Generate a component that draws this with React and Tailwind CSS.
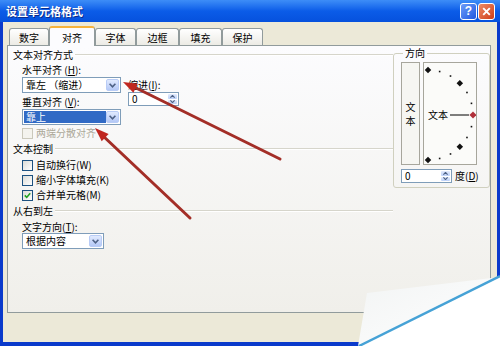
import React from 'react';

const Chevron = () => (
  <svg width="7" height="5" viewBox="0 0 7 5">
    <path d="M0.6 0.8 L3.5 3.8 L6.4 0.8" fill="none" stroke="#4D6185" strokeWidth="1.6" />
  </svg>
);

const DropBtn = () => (
  <div className="w-[13px] flex items-center justify-center bg-gradient-to-b from-[#E1EAFE] to-[#B4C8F6] border border-[#B9CCF6] rounded-[2px]">
    <Chevron />
  </div>
);

const Select = ({ value, width, selected }) => (
  <div className={`flex items-stretch h-[16px] border border-[#7F9DB9] bg-white p-[1px] ${width}`}>
    <div
      className={`flex-1 flex items-center px-[2px] leading-[12px] ${
        selected ? 'bg-[#316AC5] text-white' : ''
      }`}
    >
      {value}
    </div>
    <DropBtn />
  </div>
);

const Spin = ({ width }) => (
  <div className={`flex h-[14px] border border-[#7F9DB9] bg-white ${width}`}>
    <div className="flex-1 pl-[3px] leading-[12px]">0</div>
    <div className="w-[11px] flex flex-col gap-[1px] p-[1px]">
      <div className="flex-1 flex items-center justify-center bg-gradient-to-b from-[#E3EBFD] to-[#BCD0F8] rounded-[1px]">
        <svg width="5" height="3" viewBox="0 0 5 3">
          <path d="M0.4 2.7 L2.5 0.4 L4.6 2.7" fill="none" stroke="#4D6185" strokeWidth="1.1" />
        </svg>
      </div>
      <div className="flex-1 flex items-center justify-center bg-gradient-to-b from-[#E3EBFD] to-[#BCD0F8] rounded-[1px]">
        <svg width="5" height="3" viewBox="0 0 5 3">
          <path d="M0.4 0.3 L2.5 2.6 L4.6 0.3" fill="none" stroke="#4D6185" strokeWidth="1.1" />
        </svg>
      </div>
    </div>
  </div>
);

const Check = ({ label, checked, disabled }) => (
  <div className="flex items-center gap-[3px] h-[14px]">
    <div
      className={`w-[11px] h-[11px] border flex items-center justify-center ${
        disabled
          ? 'border-[#CAC8BB] bg-[#F4F3EE]'
          : 'border-[#1C5180] bg-gradient-to-br from-[#DCDCD7] to-white'
      }`}
    >
      {checked && (
        <svg width="7" height="7" viewBox="0 0 7 7">
          <path d="M0.8 3.4 L2.7 5.4 L6.2 1.2" fill="none" stroke="#21A121" strokeWidth="1.6" />
        </svg>
      )}
    </div>
    <span className={`leading-[12px] ${disabled ? 'text-[#ACA899]' : ''}`}>{label}</span>
  </div>
);

const GroupHead = ({ title, className }) => (
  <div className={`flex items-center h-[14px] ${className}`}>
    <span className="leading-[12px] pr-[2px]">{title}</span>
    <div className="flex-1 h-[2px] border-t border-[#D6D5CB] border-b border-b-white" />
  </div>
);

const Tab = ({ label, width, active }) =>
  active ? (
    <div
      className={`${width} h-[20px] -mb-[1px] z-10 relative flex items-center justify-center bg-[#FCFCFE] border border-b-0 border-[#919B9C] border-t-2 border-t-[#F6B33D] rounded-t-[3px]`}
    >
      {label}
    </div>
  ) : (
    <div
      className={`${width} h-[17px] flex items-center justify-center bg-gradient-to-b from-white to-[#ECEBE5] border border-b-0 border-[#919B9C] rounded-t-[3px]`}
    >
      {label}
    </div>
  );

const arrowHead = (tx, ty, fx, fy, len, w) => {
  const dx = tx - fx;
  const dy = ty - fy;
  const d = Math.hypot(dx, dy);
  const ux = dx / d;
  const uy = dy / d;
  const bx = tx - ux * len;
  const by = ty - uy * len;
  const nx = -uy * (w / 2);
  const ny = ux * (w / 2);
  return `${tx},${ty} ${bx + nx},${by + ny} ${bx - nx},${by - ny}`;
};

const Dial = () => {
  const cx = 4;
  const cy = 52;
  const r = 45;
  const pts = [];
  for (let a = -90; a <= 90; a += 15) {
    const rad = (a * Math.PI) / 180;
    pts.push({ a, x: cx + r * Math.cos(rad), y: cy - r * Math.sin(rad) });
  }
  return (
    <svg width="52" height="101" viewBox="0 0 52 101">
      {pts.map((p) => {
        if (p.a === 0) {
          return (
            <rect
              key={p.a}
              x={p.x - 2.5}
              y={p.y - 2.5}
              width="5"
              height="5"
              fill="#B0303A"
              transform={`rotate(45 ${p.x} ${p.y})`}
            />
          );
        }
        if (Math.abs(p.a) % 45 === 0) {
          return (
            <rect
              key={p.a}
              x={p.x - 2.3}
              y={p.y - 2.3}
              width="4.6"
              height="4.6"
              fill="#111"
              transform={`rotate(45 ${p.x} ${p.y})`}
            />
          );
        }
        return <rect key={p.a} x={p.x - 0.8} y={p.y - 0.8} width="1.6" height="1.6" fill="#111" />;
      })}
      <text x="4" y="56" fontSize="10" fill="#000" fontFamily="'Noto Sans CJK SC', sans-serif">
        文本
      </text>
      <line x1="26" y1="52" x2="45" y2="52" stroke="#000" strokeWidth="1" />
    </svg>
  );
};

export default function App() {
  return (
    <div className="relative w-[500px] h-[346px] overflow-hidden flex flex-col bg-[#0A3ACB] text-[10px] text-black font-['Noto_Sans_CJK_SC',sans-serif]">
      {/* title bar */}
      <div className="h-[22px] flex items-center justify-between pl-[6px] pr-[5px] bg-gradient-to-b from-[#3D8DF7] via-[#0B5CE8] to-[#0651DD]">
        <span className="text-white font-bold text-[11px] leading-[14px] [text-shadow:1px_1px_0_#0A2A8A]">
          设置单元格格式
        </span>
        <div className="flex gap-[1px] items-center">
          <div className="w-[17px] h-[17px] rounded-[3px] border border-white bg-gradient-to-br from-[#6D9BF8] to-[#1E56E0] flex items-center justify-center text-white font-bold text-[12px] leading-[12px] font-['Liberation_Sans',sans-serif]">
            ?
          </div>
          <div className="w-[17px] h-[17px] rounded-[3px] border border-white bg-gradient-to-br from-[#EC8A63] to-[#CE3A12] flex items-center justify-center">
            <svg width="9" height="9" viewBox="0 0 9 9">
              <path d="M1.2 1.2 L7.8 7.8 M7.8 1.2 L1.2 7.8" stroke="#fff" strokeWidth="1.9" />
            </svg>
          </div>
        </div>
      </div>

      {/* body */}
      <div className="flex-1 mx-[3px] mb-[4px] bg-[#ECE9D8] flex flex-col pt-[4px]">
        <div className="flex items-end h-[19px] pl-[6px]">
          <Tab label="数字" width="w-[40px]" />
          <Tab label="对齐" width="w-[46px]" active />
          <Tab label="字体" width="w-[41px]" />
          <Tab label="边框" width="w-[43px]" />
          <Tab label="填充" width="w-[43px]" />
          <Tab label="保护" width="w-[41px]" />
        </div>

        <div className="ml-[4px] w-[484px] h-[268px] border border-[#919B9C] bg-gradient-to-b from-[#FCFCFE] to-[#F0EFEA] flex">
          {/* left column */}
          <div className="w-[385px] pl-[5px] pt-[2px] flex flex-col">
            <GroupHead title="文本对齐方式" />
            <div className="flex pl-[9px] mt-[1px]">
              <div className="flex flex-col">
                <div className="h-[14px] leading-[12px] flex items-center">
                  水平对齐 (<u>H</u>):
                </div>
                <Select value="靠左 （缩进）" width="w-[99px]" />
                <div className="h-[14px] mt-[2px] leading-[12px] flex items-center">
                  垂直对齐 (<u>V</u>):
                </div>
                <Select value="靠上" width="w-[99px]" selected />
                <div className="mt-[1px]">
                  <Check label="两端分散对齐" disabled />
                </div>
              </div>
              <div className="flex flex-col ml-[7px] pt-[15px]">
                <div className="h-[14px] leading-[12px] flex items-center">
                  缩进(<u>I</u>):
                </div>
                <Spin width="w-[51px]" />
              </div>
            </div>

            <GroupHead title="文本控制" className="mt-[2px]" />
            <div className="flex flex-col gap-[1px] pl-[9px] mt-[2px]">
              <Check label="自动换行(W)" />
              <Check label="缩小字体填充(K)" />
              <Check label="合并单元格(M)" checked />
            </div>

            <GroupHead title="从右到左" className="mt-[2px]" />
            <div className="pl-[9px] mt-[2px] flex flex-col">
              <div className="h-[13px] leading-[12px] flex items-center">
                文字方向(<u>T</u>):
              </div>
              <Select value="根据内容" width="w-[82px]" />
            </div>
          </div>

          {/* orientation group */}
          <fieldset className="w-[97px] h-[141px] mt-[1px] border border-[#D0D0BF] rounded-[3px] pl-[7px] pt-[3px] flex flex-col">
            <legend className="px-[2px] ml-[2px] leading-[12px]">方向</legend>
            <div className="flex gap-[3px]">
              <div className="w-[19px] h-[103px] border border-[#A7A69C] bg-[#F6F6F2] flex flex-col items-center justify-center gap-[1px]">
                <span className="leading-[13px]">文</span>
                <span className="leading-[13px]">本</span>
              </div>
              <div className="w-[54px] h-[103px] border border-[#A7A69C] bg-[#FBFBF9]">
                <Dial />
              </div>
            </div>
            <div className="flex items-center mt-[4px] gap-[3px]">
              <Spin width="w-[51px]" />
              <span className="leading-[12px]">度(<u>D</u>)</span>
            </div>
          </fieldset>
        </div>
      </div>

      {/* annotation arrows */}
      <svg className="absolute top-0 left-0 pointer-events-none" width="500" height="346" viewBox="0 0 500 346">
        <line x1="280" y1="159" x2="132" y2="86" stroke="#A32E27" strokeWidth="3" strokeLinecap="round" />
        <polygon points={arrowHead(123, 82, 280, 159, 14, 10)} fill="#C0261F" />
        <line x1="190" y1="218" x2="102" y2="135" stroke="#A32E27" strokeWidth="3" strokeLinecap="round" />
        <polygon points={arrowHead(95, 128, 190, 218, 14, 10)} fill="#C0261F" />
      </svg>

      {/* page curl */}
      <svg className="absolute top-0 left-0 pointer-events-none" width="500" height="346" viewBox="0 0 500 346">
        <defs>
          <linearGradient id="fold" x1="0" y1="0" x2="1" y2="1">
            <stop offset="0" stopColor="#F2F4F4" />
            <stop offset="1" stopColor="#FFFFFF" />
          </linearGradient>
        </defs>
        <polygon points="367,293 358,346 500,276 500,277" fill="url(#fold)" />
        <polygon points="360,346 500,346 500,276" fill="#FFFFFF" />
        <line x1="359" y1="346" x2="500" y2="276" stroke="#46A2D6" strokeWidth="2.5" />
      </svg>
    </div>
  );
}
